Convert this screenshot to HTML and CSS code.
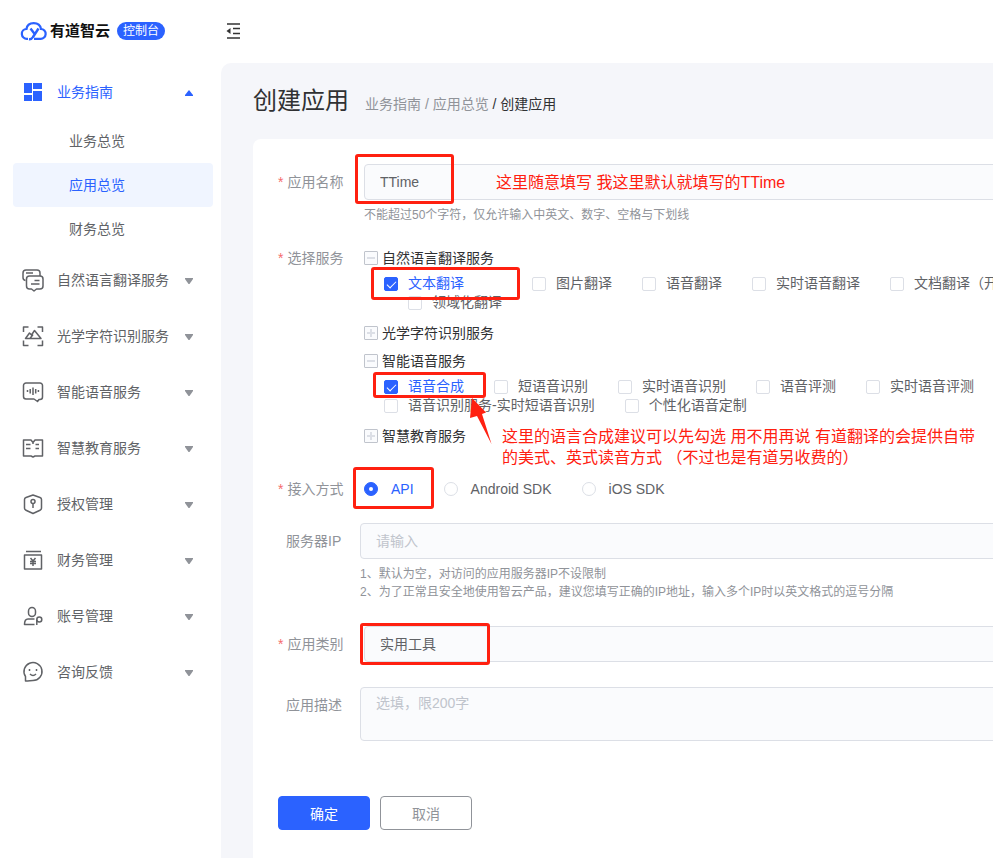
FILE: index.html
```html
<!DOCTYPE html>
<html lang="zh-CN">
<head>
    <meta charset="UTF-8">
    <meta name="viewport" content="width=device-width, initial-scale=1.0">
    <title>创建应用</title>
    <link rel="stylesheet" href="styles.css">
</head>
<body>
    <header class="header">
        <a class="logo" href="#">
            <svg class="logo-icon" width="28" height="20" viewBox="0 0 28 20" fill="none" stroke="#2b62ff" stroke-width="2.2">
                <path d="M8 17.800H7A4.900 4.900 0 0 1 6.500 8C7 4.200 9.800 2.100 13.700 2.100c3.900 0 6.700 2.200 7.300 5.900a4.900 4.900 0 0 1-.5 9.800H14"/>
                <path d="M10.500 7.500l3.800 5M18.500 7.500l-5.500 8.500q-1.500 2.500-4 2.200" stroke-width="2.400"/>
            </svg>
            <span class="logo-text">有道智云</span>
        </a>
        <span class="badge">控制台</span>
        <button type="button" class="collapse" aria-label="收起菜单">
            <svg width="14" height="16" viewBox="0 0 14 16" fill="none" stroke="#333" stroke-width="1.5">
                <path d="M1 1h13M7 5.500h7M7 10.500h7M1 15h13"/>
                <path d="M0.500 8L4.500 5v6z" fill="#333" stroke="none"/>
            </svg>
        </button>
    </header>

    <div class="layout">
        <nav class="sidebar">
            <a class="menu-item open" href="#">
                <svg class="menu-icon" viewBox="0 0 24 24"><path fill="#2b62ff" d="M3 3h8v10H3zM12 3h9v6h-9zM3 15h8v6H3zM12 11h9v10h-9z"/></svg>
                <span>业务指南</span>
                <svg class="arrow" viewBox="0 0 8 6"><path d="M4 0L8 5v1H0V5z"/></svg>
            </a>
            <div class="submenu">
                <a href="#">业务总览</a>
                <a class="active" href="#">应用总览</a>
                <a href="#">财务总览</a>
            </div>
            <a class="menu-item" href="#">
                <svg class="menu-icon" viewBox="0 0 24 24">
                    <path d="M19 8V5a3 3 0 0 0-3-3H5a3 3 0 0 0-3 3v4.500a3 3 0 0 0 2.500 3M5 5h7"/>
                    <path d="M8.500 8H19a3 3 0 0 1 3 3v7a3 3 0 0 1-3 3h-3.500L13 23l-2.500-2h-2a3 3 0 0 1-3-3v-7a3 3 0 0 1 3-3zM13.500 12.500h5M10 16h8.500"/>
                </svg>
                <span>自然语言翻译服务</span>
                <svg class="arrow" viewBox="0 0 8 6"><path d="M0 0h8v1L4.500 6h-1L0 1z"/></svg>
            </a>
            <a class="menu-item" href="#">
                <svg class="menu-icon" viewBox="0 0 24 24">
                    <path d="M2.500 8V3h5M16.500 3h5v5M21.500 16.500v5h-5M7.500 21.500h-5v-5"/>
                    <path d="M4.500 14.500L8.500 9l2 2 3-4.500 6.500 8zM9 14.500l3-4"/>
                </svg>
                <span>光学字符识别服务</span>
                <svg class="arrow" viewBox="0 0 8 6"><path d="M0 0h8v1L4.500 6h-1L0 1z"/></svg>
            </a>
            <a class="menu-item" href="#">
                <svg class="menu-icon" viewBox="0 0 24 24">
                    <path d="M5 3h14a2.500 2.500 0 0 1 2.500 2.500V17a2.500 2.500 0 0 1-2.500 2.500h-1L16.500 21.500 13 19H5a2.500 2.500 0 0 1-2.500-2.500v-11A2.500 2.500 0 0 1 5 3z"/>
                    <path d="M6.500 10v2M9.200 9v4.500M12 7.500v7.500M14.700 9v4.500M17.400 10v2"/>
                </svg>
                <span>智能语音服务</span>
                <svg class="arrow" viewBox="0 0 8 6"><path d="M0 0h8v1L4.500 6h-1L0 1z"/></svg>
            </a>
            <a class="menu-item" href="#">
                <svg class="menu-icon" viewBox="0 0 24 24">
                    <path d="M12 6.500L10 4H2.500v16H10l2 1 2-1h7.500V4H14zM5 8.500h4.500M5 12.500h4.500M14.500 8.500H18M14.500 12.500H18M12 7v1"/>
                </svg>
                <span>智慧教育服务</span>
                <svg class="arrow" viewBox="0 0 8 6"><path d="M0 0h8v1L4.500 6h-1L0 1z"/></svg>
            </a>
            <a class="menu-item" href="#">
                <svg class="menu-icon" viewBox="0 0 24 24">
                    <path d="M12 3l7 2.500q1.500.5 1.500 2V16q0 1.500-1.500 2.200L12 21.500l-7-3.300Q3.500 17.500 3.500 16V7.500q0-1.500 1.500-2z"/>
                    <circle cx="12" cy="9.500" r="2"/>
                    <path d="M12 11.500V16"/>
                </svg>
                <span>授权管理</span>
                <svg class="arrow" viewBox="0 0 8 6"><path d="M0 0h8v1L4.500 6h-1L0 1z"/></svg>
            </a>
            <a class="menu-item" href="#">
                <svg class="menu-icon" viewBox="0 0 24 24">
                    <path d="M5 3.500h15M3.500 7h17v14h-17z"/>
                    <path d="M9.500 10l2.500 3 2.500-3M9 13.500h6M9 15.500h6M12 13v5"/>
                </svg>
                <span>财务管理</span>
                <svg class="arrow" viewBox="0 0 8 6"><path d="M0 0h8v1L4.500 6h-1L0 1z"/></svg>
            </a>
            <a class="menu-item" href="#">
                <svg class="menu-icon" viewBox="0 0 24 24">
                    <rect x="7.500" y="3.500" width="7" height="9" rx="3.500"/>
                    <path d="M13.500 20.500h-10Q3.500 15 7 15h6.500"/>
                    <circle cx="18.300" cy="15.500" r="2.500"/>
                    <path d="M15.800 15.500v5.500"/>
                </svg>
                <span>账号管理</span>
                <svg class="arrow" viewBox="0 0 8 6"><path d="M0 0h8v1L4.500 6h-1L0 1z"/></svg>
            </a>
            <a class="menu-item" href="#">
                <svg class="menu-icon" viewBox="0 0 24 24">
                    <path d="M4.500 21v-4.500A9 9 0 1 1 12 20.500c-2.500 0-4 .5-7.500.5z"/>
                    <path d="M8.500 9v2M15.500 9v2M9 14q3 3 6 0"/>
                </svg>
                <span>咨询反馈</span>
                <svg class="arrow" viewBox="0 0 8 6"><path d="M0 0h8v1L4.500 6h-1L0 1z"/></svg>
            </a>
        </nav>

        <main class="main">
            <div class="page-head">
                <h1>创建应用</h1>
                <div class="breadcrumb"><a href="#">业务指南</a> / <a href="#">应用总览</a> <b>/ 创建应用</b></div>
            </div>

            <form class="card">
                <div class="form-item">
                    <label class="label required" for="appName">应用名称</label>
                    <div class="content">
                        <input type="text" class="field" id="appName" value="TTime">
                        <p class="help">不能超过50个字符，仅允许输入中英文、数字、空格与下划线</p>
                        <span class="mark mark-name"></span>
                        <span class="note note-name">这里随意填写 我这里默认就填写的TTime</span>
                    </div>
                </div>

                <div class="form-item spaced">
                    <span class="label required label-short">选择服务</span>
                    <div class="content">
                        <div class="group-title"><button type="button" class="toggle" aria-label="收起"></button>自然语言翻译服务</div>
                        <div class="group">
                            <div class="row">
                                <label class="check wide"><input type="checkbox" checked><span>文本翻译</span></label>
                                <label class="check"><input type="checkbox"><span>图片翻译</span></label>
                                <label class="check"><input type="checkbox"><span>语音翻译</span></label>
                                <label class="check"><input type="checkbox"><span>实时语音翻译</span></label>
                                <label class="check"><input type="checkbox"><span>文档翻译（开</span></label>
                            </div>
                            <div class="row indent">
                                <label class="check"><input type="checkbox"><span>领域化翻译</span></label>
                            </div>
                            <span class="mark mark-text"></span>
                        </div>
                        <div class="group-title"><button type="button" class="toggle plus" aria-label="展开"></button>光学字符识别服务</div>
                        <div class="group-title"><button type="button" class="toggle" aria-label="收起"></button>智能语音服务</div>
                        <div class="group">
                            <div class="row">
                                <label class="check"><input type="checkbox" checked><span>语音合成</span></label>
                                <label class="check"><input type="checkbox"><span>短语音识别</span></label>
                                <label class="check"><input type="checkbox"><span>实时语音识别</span></label>
                                <label class="check"><input type="checkbox"><span>语音评测</span></label>
                                <label class="check"><input type="checkbox"><span>实时语音评测</span></label>
                            </div>
                            <div class="row">
                                <label class="check"><input type="checkbox"><span>语音识别服务-实时短语音识别</span></label>
                                <label class="check"><input type="checkbox"><span>个性化语音定制</span></label>
                            </div>
                            <span class="mark mark-voice"></span>
                            <svg class="pointer" width="22" height="46" viewBox="0 0 22 46"><path fill="#ff2010" d="M2 0L16 14.500 12 16 21.500 46 7 18 0 20z"/></svg>
                            <p class="note note-voice">这里的语言合成建议可以先勾选 用不用再说 有道翻译的会提供自带<br>的美式、英式读音方式 （不过也是有道另收费的）</p>
                        </div>
                        <div class="group-title"><button type="button" class="toggle plus" aria-label="展开"></button>智慧教育服务</div>
                    </div>
                </div>

                <div class="form-item">
                    <span class="label required label-short">接入方式</span>
                    <div class="content">
                        <div class="radios">
                            <label class="check"><input type="radio" name="access" checked><span>API</span></label>
                            <label class="check"><input type="radio" name="access"><span>Android SDK</span></label>
                            <label class="check"><input type="radio" name="access"><span>iOS SDK</span></label>
                        </div>
                        <span class="mark mark-api"></span>
                    </div>
                </div>

                <div class="form-item spaced">
                    <label class="label" for="serverIp">服务器IP</label>
                    <div class="content">
                        <input type="text" class="field" id="serverIp" placeholder="请输入">
                        <p class="help">1、默认为空，对访问的应用服务器IP不设限制<br>2、为了正常且安全地使用智云产品，建议您填写正确的IP地址，输入多个IP时以英文格式的逗号分隔</p>
                    </div>
                </div>

                <div class="form-item spaced">
                    <label class="label required" for="category">应用类别</label>
                    <div class="content">
                        <select class="field" id="category">
                            <option>实用工具</option>
                        </select>
                        <span class="mark mark-category"></span>
                    </div>
                </div>

                <div class="form-item">
                    <label class="label" for="desc">应用描述</label>
                    <div class="content">
                        <textarea class="field" id="desc" placeholder="选填，限200字"></textarea>
                    </div>
                </div>

                <div class="actions">
                    <button type="submit" class="btn btn-primary">确定</button>
                    <button type="button" class="btn">取消</button>
                </div>
            </form>
        </main>
    </div>
</body>
</html>
```

FILE: styles.css
```css
* {
    box-sizing: border-box;
}

body {
    margin: 0;
    min-height: 100vh;
    display: flex;
    flex-direction: column;
    overflow-x: hidden;
    background-color: #fff;
    font-family: "Liberation Sans", "Noto Sans CJK SC", sans-serif;
    font-size: 14px;
    line-height: 20px;
    color: #606266;
}

a {
    color: inherit;
    text-decoration: none;
}

p {
    margin: 0;
}

button, input, select, textarea {
    font-family: inherit;
    font-size: 14px;
}

/* header */
.header {
    height: 63px;
    padding: 0 0 2px 20px;
    display: flex;
    align-items: center;
}

.logo {
    display: flex;
    align-items: center;
    gap: 2px;
}

.logo-text {
    font-size: 15px;
    font-weight: bold;
    color: #111;
}

.badge {
    margin-left: 7px;
    padding: 0 6px;
    border-radius: 9px;
    background-color: #2b62ff;
    color: #fff;
    font-size: 12px;
    line-height: 18px;
}

.collapse {
    display: flex;
    margin-left: 61px;
    padding: 0;
    border: none;
    background: none;
    cursor: pointer;
}

/* layout */
.layout {
    flex: 1;
    display: flex;
}

.sidebar {
    flex: 0 0 221px;
}

.menu-item {
    display: flex;
    align-items: center;
    height: 56px;
    padding: 2px 28px 0 21px;
}

.menu-item span {
    flex: 1;
    margin-left: 12px;
}

.menu-icon {
    width: 24px;
    height: 24px;
    fill: none;
    stroke: #606266;
    stroke-width: 1.5;
    stroke-linejoin: round;
}

.open .menu-icon {
    stroke: none;
}

.arrow {
    width: 8px;
    height: 6px;
    margin-top: 2px;
    fill: #909399;
}

.open {
    color: #2b62ff;
}

.open .arrow {
    fill: #2b62ff;
}

.submenu {
    padding: 0 8px 0 13px;
}

.submenu a {
    display: block;
    height: 44px;
    padding-left: 56px;
    border-radius: 4px;
    line-height: 44px;
}

.submenu .active {
    background-color: #f0f5ff;
    color: #2b62ff;
}

.main {
    flex: 1;
    min-width: 0;
    display: flex;
    flex-direction: column;
    padding-left: 32px;
    border-top-left-radius: 10px;
    background-color: #f5f6fa;
    overflow: hidden;
}

.page-head {
    display: flex;
    align-items: center;
    gap: 16px;
    height: 76px;
}

h1 {
    margin: 0;
    font-size: 24px;
    font-weight: normal;
    line-height: 32px;
    color: #303133;
}

.breadcrumb {
    padding-top: 6px;
    color: #909399;
}

.breadcrumb b {
    font-weight: normal;
    color: #303133;
}

/* form */
.card {
    flex: 1;
    margin-right: -20px;
    padding: 25px 0 24px 25px;
    border-radius: 8px 8px 0 0;
    background-color: #fff;
}

.form-item {
    display: flex;
    margin-bottom: 20px;
}

.form-item.spaced {
    margin-bottom: 25px;
}

.label {
    flex: 0 0 82px;
    padding-left: 8px;
    line-height: 36px;
    color: #909399;
}

.label.required {
    flex-basis: 86px;
    padding-left: 0;
}

.label.label-short {
    line-height: 28px;
}

.required::before {
    content: "*";
    margin-right: 4px;
    color: #f56c6c;
}

.content {
    flex: 1;
    min-width: 0;
    position: relative;
}

.field {
    display: block;
    width: 100%;
    height: 36px;
    padding: 0 15px;
    border: 1px solid #dcdfe6;
    border-radius: 4px;
    background-color: #fafbfd;
    color: #606266;
    appearance: none;
}

.field::placeholder {
    color: #c0c4cc;
}

textarea.field {
    height: 54px;
    padding: 5px 15px;
    line-height: 20px;
    resize: none;
}

.help {
    padding-top: 6px;
    font-size: 12px;
    line-height: 18px;
    color: #909399;
}

.group-title {
    display: flex;
    align-items: center;
    gap: 4px;
    height: 28px;
    color: #303133;
}

.toggle {
    position: relative;
    width: 14px;
    height: 14px;
    padding: 0;
    border: 1px solid #c0c4cc;
    border-radius: 1px;
    background-color: #fafbfd;
}

.toggle::before, .plus::after {
    content: "";
    position: absolute;
    top: 5px;
    left: 2px;
    width: 8px;
    height: 2px;
    background-color: #dcdfe6;
}

.plus::after {
    top: 2px;
    left: 5px;
    width: 2px;
    height: 8px;
}

.group {
    position: relative;
    padding: 2px 0 7px 20px;
}

.row, .radios {
    display: flex;
    gap: 30px;
    line-height: 19px;
}

.indent {
    padding-left: 24px;
}

.radios {
    height: 28px;
    align-items: center;
}

.check {
    flex: none;
    display: flex;
    align-items: center;
    gap: 10px;
    white-space: nowrap;
}

.check.wide {
    padding-right: 38px;
}

.check input {
    position: relative;
    width: 14px;
    height: 14px;
    margin: 0;
    border: 1px solid #dcdfe6;
    border-radius: 2px;
    background-color: #fff;
    appearance: none;
}

.check input[type="radio"] {
    margin-right: 3px;
    border-radius: 50%;
}

.check input:checked {
    border-color: #2b62ff;
    background-color: #2b62ff;
}

.check input[type="checkbox"]:checked::after {
    content: "";
    position: absolute;
    top: 1px;
    left: 4px;
    width: 4px;
    height: 8px;
    border: solid #fff;
    border-width: 0 1px 1px 0;
    transform: rotate(45deg);
}

.check input[type="radio"]:checked::after {
    content: "";
    position: absolute;
    top: 4px;
    left: 4px;
    width: 4px;
    height: 4px;
    border-radius: 50%;
    background-color: #fff;
}

.check input:checked + span {
    color: #2b62ff;
}

.actions {
    display: flex;
    gap: 10px;
    padding-top: 35px;
}

.btn {
    width: 92px;
    height: 34px;
    padding: 0;
    border: 1px solid #909399;
    border-radius: 4px;
    background-color: #fff;
    color: #909399;
    cursor: pointer;
}

.btn-primary {
    border-color: #2b62ff;
    background-color: #2b62ff;
    color: #fff;
}

/* red marks and notes laid over the form */
.mark {
    position: absolute;
    border: 3px solid #ff2010;
    border-radius: 3px;
    pointer-events: none;
}

.mark-name {
    top: -10px;
    left: -9px;
    width: 99px;
    height: 50px;
}

.mark-text {
    top: -5px;
    left: 7px;
    width: 149px;
    height: 33px;
}

.mark-voice {
    top: -3px;
    left: 9px;
    width: 113px;
    height: 26px;
}

.mark-api {
    top: -8px;
    left: -11px;
    width: 81px;
    height: 42px;
}

.mark-category {
    top: -3px;
    left: -4px;
    width: 130px;
    height: 42px;
}

.note {
    position: absolute;
    font-size: 16px;
    line-height: 21px;
    color: #ff2010;
    white-space: nowrap;
}

.note-name {
    top: 8px;
    left: 132px;
}

.note-voice {
    top: 51px;
    left: 138px;
}

.pointer {
    position: absolute;
    top: 23px;
    left: 106px;
}
```
